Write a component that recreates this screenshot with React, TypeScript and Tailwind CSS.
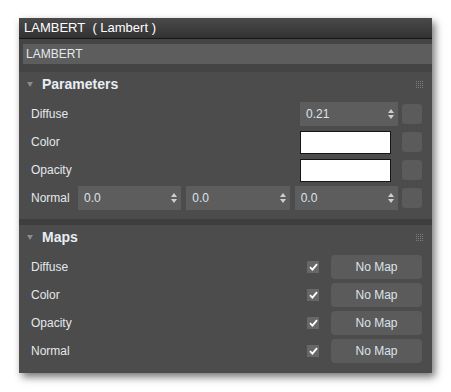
import React from 'react';

const font = { fontFamily: '"Liberation Sans", Arial, sans-serif' };

function Grip() {
  return (
    <div className="grid grid-cols-4 gap-px w-[7px]" aria-hidden="true">
      {Array.from({ length: 16 }).map((_, i) =>
      <span key={i} className="w-px h-px bg-[#7c7c7c]" />
      )}
    </div>);
}

function SectionHeader({ title }: { title: string }) {
  return (
    <div className="h-[24px] flex items-center pl-[8px] pr-[9px]">
      <svg width="6" height="5" viewBox="0 0 6 5" aria-hidden="true">
        <polygon points="0,0 6,0 3,5" fill="#8c8c8c" />
      </svg>
      <span className="ml-[9px] text-[14px] font-bold text-[#e8eef4] flex-1">{title}</span>
      <Grip />
    </div>);
}

function Spinner({ value, className = '' }: { value: string; className?: string }) {
  return (
    <div className={`h-[24px] bg-[#5d5d5d] flex items-center pl-[6px] pr-[4px] ${className}`}>
      <span className="flex-1 text-[12px] text-[#dde4ea]">{value}</span>
      <svg width="6" height="10" viewBox="0 0 6 10" aria-hidden="true">
        <polygon points="3,0 6,4 0,4" fill="#cfcfcf" />
        <polygon points="0,6 6,6 3,10" fill="#cfcfcf" />
      </svg>
    </div>);
}

function SmallButton() {
  return <div className="w-[20px] h-[20px] ml-[4px] rounded-[3px] bg-[#5b5b5b] shrink-0" />;
}

function Label({ children }: { children: React.ReactNode }) {
  return <span className="flex-1 text-[12px] text-[#e4e8ec]">{children}</span>;
}

function Swatch() {
  return (
    <div className="w-[98px]">
      <div className="w-[91px] h-[23px] bg-white border border-[#151515]" />
    </div>);
}

function MapRow({ label }: { label: string }) {
  return (
    <div className="h-[24px] flex items-center">
      <Label>{label}</Label>
      <div className="w-[12px] h-[12px] bg-[#676767] flex items-center justify-center">
        <svg width="9" height="8" viewBox="0 0 9 8" aria-hidden="true">
          <path d="M1 4.2 L3.4 6.6 L8 1.2" stroke="#ffffff" strokeWidth="1.8" fill="none" />
        </svg>
      </div>
      <div className="ml-[12px] w-[91px] h-[24px] rounded-[4px] bg-[#5b5b5b] flex items-center justify-center text-[12px] text-[#dde4ea]">
        No Map
      </div>
    </div>);
}

export default function App() {
  return (
    <div className="w-[451px] h-[392px] bg-white overflow-hidden" style={font}>
      <div className="ml-[19px] mt-[18px] w-[413px] shadow-[3px_4px_8px_rgba(0,0,0,0.55)]">
        <div className="h-[20px] flex items-center px-[5px] bg-gradient-to-b from-[#4a4a4a] to-[#323232] text-[13px] text-white">
          LAMBERT&nbsp; ( Lambert )
        </div>
        <div className="h-px bg-[#161616]" />
        <div className="bg-[#444444] pt-[5px] pb-[8px] pl-[4px]">
          <div className="h-[20px] bg-[#5d5d5d] flex items-center pl-[3px] text-[12px] text-[#e4e8ec]">
            LAMBERT
          </div>
        </div>

        <div className="bg-[#4c4c4c]">
          <SectionHeader title="Parameters" />
          <div className="mt-[6px] flex flex-col gap-[4px] pb-[9px] pl-[12px] pr-[10px]">
            <div className="h-[24px] flex items-center">
              <Label>Diffuse</Label>
              <Spinner value="0.21" className="w-[98px]" />
              <SmallButton />
            </div>
            <div className="h-[24px] flex items-center">
              <Label>Color</Label>
              <Swatch />
              <SmallButton />
            </div>
            <div className="h-[24px] flex items-center">
              <Label>Opacity</Label>
              <Swatch />
              <SmallButton />
            </div>
            <div className="h-[24px] flex items-center">
              <span className="w-[47px] shrink-0 text-[12px] text-[#e4e8ec]">Normal</span>
              <div className="flex-1 flex gap-[5px]">
                <Spinner value="0.0" className="flex-1" />
                <Spinner value="0.0" className="flex-1" />
                <Spinner value="0.0" className="flex-1" />
              </div>
              <SmallButton />
            </div>
          </div>
        </div>

        <div className="h-[6px] bg-[#3e3e3e]" />

        <div className="bg-[#4c4c4c]">
          <SectionHeader title="Maps" />
          <div className="mt-[6px] flex flex-col gap-[4px] pb-[10px] pl-[12px] pr-[10px]">
            <MapRow label="Diffuse" />
            <MapRow label="Color" />
            <MapRow label="Opacity" />
            <MapRow label="Normal" />
          </div>
        </div>
      </div>
    </div>);
}
